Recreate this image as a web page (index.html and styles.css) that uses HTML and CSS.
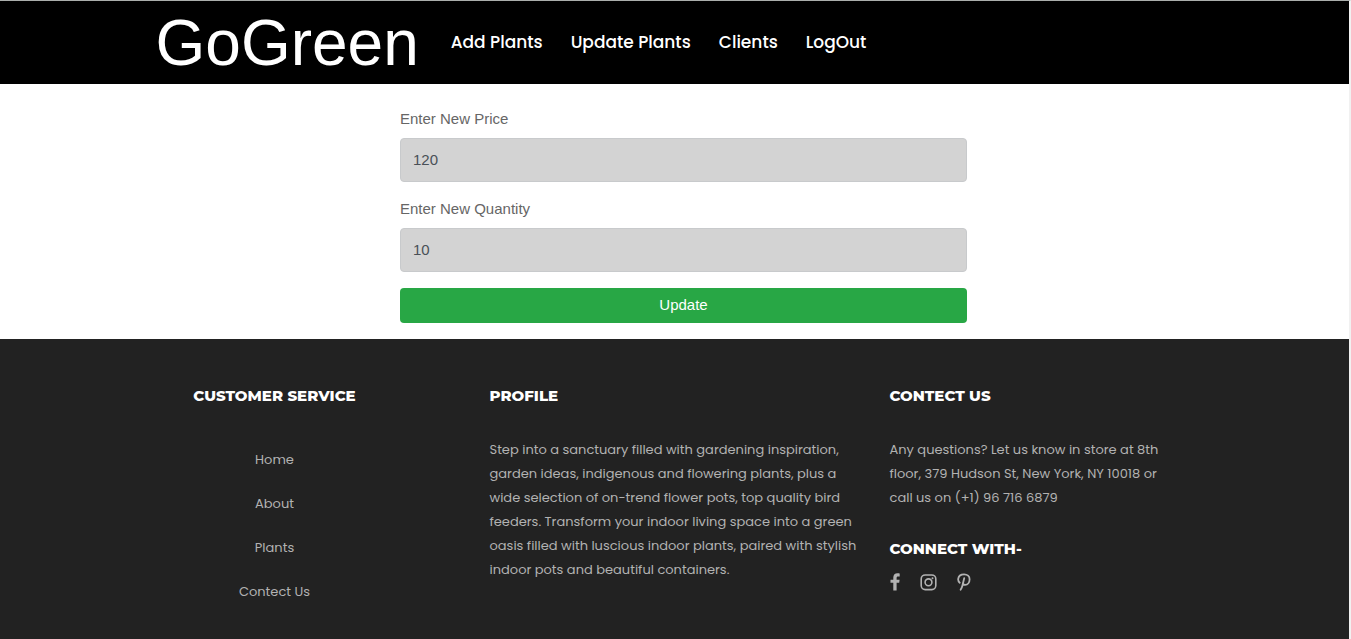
FILE: index.html
```html
<!DOCTYPE html>
<html lang="en">
<head>
<meta charset="utf-8">
<meta name="viewport" content="width=device-width, initial-scale=1">
<title>GoGreen - Update Plants</title>
<link rel="stylesheet" href="styles.css">
</head>
<body>
<header class="site-header">
  <div class="header-inner">
    <a class="logo" href="#">GoGreen</a>
    <nav class="main-nav">
      <a href="#">Add Plants</a>
      <a href="#">Update Plants</a>
      <a href="#">Clients</a>
      <a href="#">LogOut</a>
    </nav>
  </div>
</header>
<main>
  <form class="update-form">
    <div class="field">
      <label for="price">Enter New Price</label>
      <input id="price" type="text" value="120">
    </div>
    <div class="field">
      <label for="quantity">Enter New Quantity</label>
      <input id="quantity" type="text" value="10">
    </div>
    <button type="button">Update</button>
  </form>
</main>
<footer class="site-footer">
  <div class="footer-inner">
    <section class="service">
      <h4>CUSTOMER SERVICE</h4>
      <ul>
        <li><a href="#">Home</a></li>
        <li><a href="#">About</a></li>
        <li><a href="#">Plants</a></li>
        <li><a href="#">Contect Us</a></li>
      </ul>
    </section>
    <section class="profile">
      <h4>PROFILE</h4>
      <p>Step into a sanctuary filled with gardening inspiration, garden ideas, indigenous and flowering plants, plus a wide selection of on-trend flower pots, top quality bird feeders. Transform your indoor living space into a green oasis filled with luscious indoor plants, paired with stylish indoor pots and beautiful containers.</p>
    </section>
    <section class="contact">
      <h4>CONTECT US</h4>
      <p>Any questions? Let us know in store at 8th floor, 379 Hudson St, New York, NY 10018 or call us on (+1) 96 716 6879</p>
      <h4 class="connect">CONNECT WITH-</h4>
      <div class="social">
        <a href="#" aria-label="Facebook"><svg width="10" height="18" viewBox="0 0 10 18"><path fill="currentColor" d="M9.700.5v3H8.100C6.900 3.500 6.600 4.100 6.600 5v1.700h3l-.4 3.100H6.600V17.500H3.300V9.800H.5V6.700h2.800V4.500C3.300 1.800 5 .3 7.400.3c1.100 0 2 .1 2.300.2z"/></svg></a>
        <a href="#" aria-label="Instagram"><svg width="17" height="18" viewBox="0 0 17 18"><g fill="none" stroke="currentColor" stroke-width="1.600"><rect x="1.200" y="2" width="14.600" height="14.600" rx="4"/><circle cx="8.500" cy="9.300" r="3.400"/></g><circle cx="12.500" cy="5.300" r="1" fill="currentColor"/></svg></a>
        <a href="#" aria-label="Pinterest"><svg width="14" height="18" viewBox="0 0 14 18"><path fill="none" stroke="currentColor" stroke-width="1.800" stroke-linecap="round" stroke-linejoin="round" d="M2.700 9.700C1.500 8.800 1 7.500 1.200 5.900 1.500 3.100 4 1.300 7.100 1.300c3.200 0 5.500 2 5.500 4.900 0 3.200-1.900 5.700-4.400 5.700-1.200 0-2-.6-2.300-1.500M7.200 5.200 5.300 13c-.3 1.300-.9 2.700-1.700 3.800"/></svg></a>
      </div>
    </section>
  </div>
</footer>
</body>
</html>
```
FILE: styles.css
```css
* {
  box-sizing: border-box;
}

body {
  margin: 0;
  min-height: 100vh;
  display: flex;
  flex-direction: column;
  border-top: 1px solid #aaaeac;
  border-right: 2px solid #f1f1f1;
  background: #fff;
  font-family: "Liberation Sans", Arial, sans-serif;
  font-size: 15px;
}

a {
  color: inherit;
  text-decoration: none;
}

.site-header {
  background: #000;
  color: #fff;
}

.header-inner {
  display: flex;
  align-items: center;
  gap: 32px;
  max-width: 1038px;
  min-height: 83px;
  margin: 0 auto;
}

.logo {
  font-size: 64px;
  line-height: 72px;
}

.main-nav {
  display: flex;
  gap: 28px;
  padding-bottom: 2px;
  font-family: Poppins, Inter, sans-serif;
  font-size: 17px;
  font-weight: 500;
  line-height: 24px;
}

.update-form {
  max-width: 585px;
  margin: 0 auto;
  padding: 24px 0 16px 18px;
}

.field {
  margin-bottom: 16px;
}

.field label {
  display: block;
  margin-bottom: 8px;
  color: #666;
  line-height: 22px;
}

.field input {
  display: block;
  width: 100%;
  height: 44px;
  padding: 6px 12px 8px;
  border: 1px solid #c8cacc;
  border-radius: 4px;
  background: #d3d3d3;
  color: #495057;
  font: inherit;
}

.update-form button {
  display: block;
  width: 100%;
  height: 35px;
  padding: 0 12px 2px;
  border: 0;
  border-radius: 4px;
  background: #28a745;
  color: #fff;
  font: inherit;
}

.site-footer {
  flex: 1;
  padding: 48px 0 24px;
  background: #222;
  color: #b2b2b2;
  font-family: Poppins, Inter, sans-serif;
  font-size: 13px;
  line-height: 24px;
}

.footer-inner {
  display: grid;
  grid-template-columns: 315px 400px 285px;
  max-width: 1000px;
  margin: 0 auto;
}

.site-footer h4 {
  margin: 0 0 33px;
  color: #fff;
  font-family: Montserrat, Inter, sans-serif;
  font-size: 15px;
  font-weight: 800;
  line-height: 18px;
}

.site-footer p {
  margin: 0;
}

.service {
  width: 200px;
  text-align: center;
}

.profile {
  padding-right: 30px;
}

.service ul {
  margin: 0;
  padding: 0;
  list-style: none;
}

.service li {
  padding: 10px 0;
}

.site-footer .connect {
  margin: 30px 0 15px;
}

.social {
  display: flex;
  gap: 20px;
}

.social svg {
  display: block;
}
```
